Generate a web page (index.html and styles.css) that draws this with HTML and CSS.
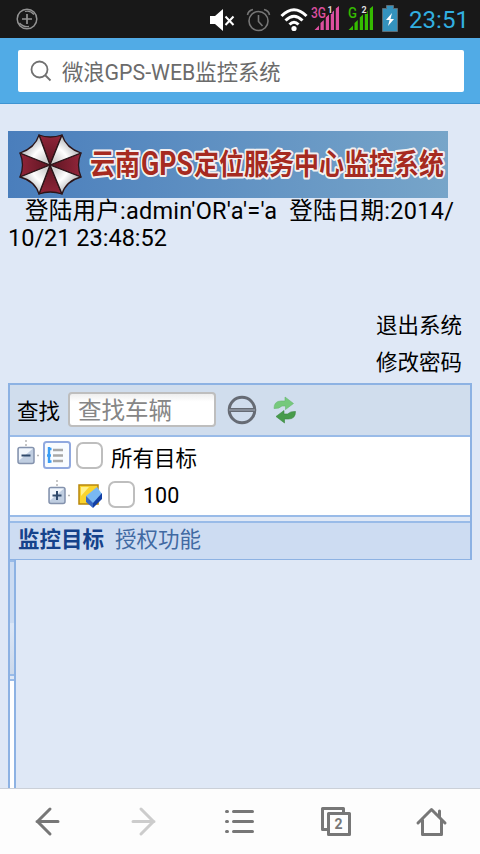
FILE: index.html
```html
<!DOCTYPE html>
<html lang="zh-CN">
<head>
<meta charset="utf-8">
<title>微浪GPS-WEB监控系统</title>
<link rel="stylesheet" href="styles.css">
</head>
<body>
<div class="screen">
  <header class="status">
    <svg class="plus" width="24" height="24" viewBox="0 0 24 24" fill="none" stroke="#929292"><circle cx="12" cy="12" r="9.800" stroke-width="1.500"/><path d="M7 12h10M12 7v10" stroke-width="1.700"/><path d="M10 4.500q5-1.500 9 3M4.500 16q4 4.500 9.500 3.500" stroke-width="1.300"/></svg>
    <div class="status-icons">
      <svg width="26" height="24" viewBox="0 0 26 24"><path d="M1 8h5l8-7v22l-8-7H1z" fill="#fff"/><path d="M16.500 8.500l8 8.500M24.500 8.500l-8 8.500" stroke="#fff" stroke-width="2"/></svg>
      <svg class="alarm" width="26" height="24" viewBox="0 0 26 24" fill="none" stroke="#777" stroke-width="1.600"><circle cx="12.500" cy="13" r="9.500"/><path d="M12.500 7v6.500l4 4.500M1.500 7q.8-4.500 5.500-5.500M23.500 7q-.8-4.500-5.500-5.500"/></svg>
      <svg class="wifi" width="28" height="25" viewBox="0 0 28 25" fill="none" stroke="#fff" stroke-width="3"><path d="M1.500 9q12.500-12.500 25 0M5.500 13.500q8.500-8.500 17 0M9.500 17.500q4.500-4.500 9 0"/><circle cx="14" cy="21.500" r="2.600" fill="#fff" stroke="none"/></svg>
      <svg class="signal" width="29" height="26" viewBox="0 0 29 26"><path d="M4.500 25l4.500-4.500V25zM10.500 25v-7l3.300-3v10zM15.800 25V12.500l3.200-3V25zM20.800 25V8.500l3.200-3V25zM25.800 25V3.500L29 1v24z" fill="#dc4f9f"/><text x="1" y="12.500" textLength="15" lengthAdjust="spacingAndGlyphs" class="net pink">3G</text><text x="17.500" y="8" class="sim">1</text></svg>
      <svg class="signal second" width="29" height="26" viewBox="0 0 29 26"><path d="M1.500 25L6 20.500V25zM7.500 25v-7l3.300-3v10zM12.800 25V12.500l3.200-3V25zM17.800 25V8.500l3.200-3V25zM22.800 25V3.500L26 1v24z" fill="#35bb00"/><text x="1" y="12.500" textLength="9" lengthAdjust="spacingAndGlyphs" class="net green">G</text><text x="14.500" y="8" class="sim">2</text></svg>
      <svg class="battery" width="16" height="27" viewBox="0 0 16 27"><path d="M.5 3.500h4V.5h7v3h4v23H.5z" fill="#3492bd" stroke="#5c6b74"/><path d="M10 8l-6 7h3.500L6 21l6-7H8.500z" fill="#fff"/></svg>
      <svg class="clock" width="64" height="26" viewBox="0 0 64 26"><text x="0" y="20" textLength="60" class="time">23:51</text></svg>
    </div>
  </header>
  <div class="address">
    <div class="search">
      <svg width="22" height="22" viewBox="0 0 22 22" fill="none" stroke="#707070" stroke-width="1.800"><circle cx="9.500" cy="9.500" r="8"/><path d="M15 15l5.500 5.500"/></svg>
      <span>微浪GPS-WEB监控系统</span>
    </div>
  </div>
  <main class="page">
    <svg class="banner" width="440" height="67" viewBox="0 0 440 67">
      <defs>
        <linearGradient id="sky"><stop stop-color="#4a7ebc"/><stop offset="1" stop-color="#77a5c9"/></linearGradient>
        <radialGradient id="silver" gradientUnits="userSpaceOnUse" cx="42" cy="34" r="31"><stop offset=".2" stop-color="#d0d0d0"/><stop offset=".6" stop-color="#fff"/><stop offset="1" stop-color="#b5b8bb"/></radialGradient>
        <radialGradient id="ruby" gradientUnits="userSpaceOnUse" cx="42" cy="34" r="31"><stop stop-color="#5c1521"/><stop offset="1" stop-color="#92253a"/></radialGradient>
      </defs>
      <rect width="440" height="67" fill="url(#sky)"/>
      <g stroke="#2b1519" stroke-width="1.300" stroke-linejoin="round">
        <path fill="url(#ruby)" d="M42 34L31 4Q42 8 54 4ZM42 34L73 22Q68 34 73 46ZM42 34L54 63Q42 59 31 63ZM42 34L12 46Q17 34 12 22Z"/>
        <path fill="url(#silver)" d="M42 34L54 4Q58 17 73 22ZM42 34L73 46Q58 50 54 63ZM42 34L31 63Q27 50 12 46ZM42 34L12 22Q27 17 31 4Z"/>
      </g>
      <g class="banner-title">
        <text x="82" y="44" textLength="50" lengthAdjust="spacingAndGlyphs">云南</text>
        <text x="133" y="44" textLength="52" lengthAdjust="spacingAndGlyphs" class="latin">GPS</text>
        <text x="186" y="44" textLength="250" lengthAdjust="spacingAndGlyphs">定位服务中心监控系统</text>
      </g>
    </svg>
    <p class="login"><span class="user">登陆用户:admin'OR'a'='a&nbsp; 登陆日期:2014/</span><br>10/21 23:48:52</p>
    <nav class="account"><a>退出系统</a><a>修改密码</a></nav>
    <section class="panel">
      <div class="toolbar">
        <label>查找</label>
        <div class="field">查找车辆</div>
        <svg class="stop" width="30" height="30" viewBox="0 0 30 30" fill="none" stroke="#666b74"><circle cx="15" cy="15" r="12.800" stroke-width="3"/><path d="M1 15h28" stroke-width="4"/><path d="M2 15h26" stroke="#9299a4" stroke-width="1.500"/></svg>
        <svg class="refresh" width="24" height="28" viewBox="0 0 24 28"><path d="M1 12.500Q1 5 8 5h4V1l8.500 6.500-8 6V10H9q-3 3-8 2.500z" fill="#76c97c" stroke="#68b570" stroke-width=".6"/><path d="M22.500 15.500q0 7.500-7 7.500h-4v4L3 20.500l8-6V18h3.500q3-3 8-2.500z" fill="#479b4b" stroke="#3c8742" stroke-width=".6"/></svg>
      </div>
      <div class="tree">
        <div class="node">
          <svg class="toggle" width="24" height="28" viewBox="0 0 24 28"><g id="box"><path d="M9 1v2M9 5v2M20 16.500h2" stroke="#b5b5b5" stroke-width="1.500"/><rect x="1" y="8.500" width="16" height="16" rx="2" fill="#c0cee1" stroke="#8492ad" stroke-width="1.500"/><path d="M2 9.500h14l-14 12z" fill="#f1f6fc"/><path d="M4.500 16.500h9" stroke="#304a6c" stroke-width="2"/></g></svg>
          <svg class="list" width="28" height="28" viewBox="0 0 28 28"><rect x="1" y="1" width="26" height="26" rx="2.500" fill="#f9fcff" stroke="#91a9df" stroke-width="2"/><path d="M10 9h10M10 14.500h10M10 20h10" stroke="#a8a8a8" stroke-width="2.400"/><path d="M4 14.500h4M6 6v16M6 8h2.500M6 20.500h2.500" stroke="#3a9df5" stroke-width="2.400"/></svg>
          <i class="check"></i><span>所有目标</span>
        </div>
        <div class="node child">
          <svg class="toggle" width="24" height="28" viewBox="0 0 24 28"><use href="#box"/><path d="M9 12v9" stroke="#304a6c" stroke-width="2"/></svg>
          <svg class="shape" width="25" height="26" viewBox="0 0 25 26"><rect x="1" y="2" width="19" height="19" fill="#fbd42d" stroke="#b8860b" stroke-width="1.500"/><path d="M3 4h8L3 13z" fill="#fff18d"/><path d="M8 13l11-9 5 7-9 10z" fill="#79b8f2"/><path d="M8 13l7 7v5l-7-6z" fill="#3768c6"/><path d="M15 20l9-10v6l-9 9z" fill="#123fa5"/></svg>
          <i class="check"></i><span class="count">100</span>
        </div>
      </div>
      <div class="splitter"></div>
      <div class="tabs"><b>监控目标</b><span>授权功能</span></div>
    </section>
    <div class="side"><div class="side-head"></div><div class="side-gap"></div></div>
  </main>
  <footer class="nav">
    <svg width="96" height="65" viewBox="0 0 96 65"><path d="M58 32.500H37M50 20L37.500 32.500 50 45"/></svg>
    <svg class="off" width="96" height="65" viewBox="0 0 96 65"><path d="M37 32.500h21M45 20l12.500 12.500L45 45"/></svg>
    <svg width="96" height="65" viewBox="0 0 96 65"><path d="M34.500 22.500h1M41.500 22.500h19M34.500 32.500h1M41.500 32.500h19M34.500 42.500h1M41.500 42.500h19"/></svg>
    <svg width="96" height="65" viewBox="0 0 96 65"><path d="M39 40.500h-4.500v-21h21V24M40.500 24.500h21v21h-21z"/><text x="50.500" y="40" text-anchor="middle" class="tabs-count">2</text></svg>
    <svg width="96" height="65" viewBox="0 0 96 65"><path d="M34 34l13.500-13.500L61 34M38.500 31v14.500h19V31M55.500 22v6"/></svg>
  </footer>
</div>
</body>
</html>
```
FILE: styles.css
```css
* { box-sizing: border-box; }
body { margin: 0; font-family: Roboto, "Noto Sans CJK SC", sans-serif; color: #000; }
svg { display: block; flex: none; }
.screen { width: 480px; height: 854px; display: flex; flex-direction: column; overflow: hidden; background: #dfe8f6; }
.status { height: 38px; flex: none; background: #181818; display: flex; justify-content: space-between; padding-left: 15px; }
.plus { margin-top: 7px; }
.status-icons { display: flex; width: 271px; padding-top: 8px; }
.alarm { margin-left: 11px; }
.wifi { margin: -1px 0 0 8px; }
.signal { margin: -3px 0 0 2px; }
.second { margin-left: 8px; }
.battery { margin: -3px 0 0 6px; }
.clock { margin-left: 11px; }
.net { font: 500 14px Roboto, sans-serif; }
.pink { fill: #dc4f9f; }
.green { fill: #35bb00; }
.sim { font: bold 9px Roboto, sans-serif; fill: #ddd; stroke: #181818; stroke-width: 2px; paint-order: stroke; }
.time { font: 24px Roboto, sans-serif; fill: #32afe0; }
.address { height: 66px; flex: none; padding: 12px 16px 0 18px; background: #51abe6; border-bottom: 1px solid #3e94d2; }
.search { height: 42px; display: flex; align-items: center; gap: 10px; padding: 0 0 1px 12px; background: #fff; border-radius: 2px; color: #6b6b6b; font-size: 21.300px; white-space: nowrap; }
.page { flex: 1; min-height: 0; padding: 27px 8px 0; display: flex; flex-direction: column; }
.banner { flex: none; }
.banner-title { font: bold 29px "Noto Sans CJK SC", sans-serif; fill: #a62a20; stroke: #f3f0f0; stroke-width: 4px; stroke-linejoin: round; paint-order: stroke; }
.latin { font: bold 33px Roboto, sans-serif; }
.login { height: 54px; flex: none; margin: 0; font-size: 23.500px; line-height: 27px; white-space: nowrap; }
.user { margin-left: 17px; letter-spacing: .25px; }
.account { display: flex; flex-direction: column; align-items: flex-end; margin-top: 55px; padding-right: 10px; font-size: 21.500px; line-height: 37px; height: 76px; flex: none; }
.panel { width: 464px; flex: none; border: solid #8db2e3; border-width: 2px 2px 1px; font-size: 21.500px; }
.toolbar { height: 52px; display: flex; align-items: center; padding: 0 0 1px 7px; background: #d0dded; border-bottom: 2px solid #99bbe8; }
.field { width: 148px; height: 35px; margin-left: 8px; padding-left: 8px; border: 2px solid #bebebe; border-radius: 4px; background: linear-gradient(#eee, #fff 25%); color: #868686; font-size: 23.500px; line-height: 34px; }
.stop { margin-left: 11px; }
.refresh { margin-left: 16px; }
.tree { height: 78px; background: #fff; }
.node { height: 39px; display: flex; align-items: center; padding: 0 0 1px 7px; }
.child { padding: 0 0 0 38px; }
.toggle { margin-top: -6px; }
.list { margin: -2px 0 0 2px; }
.shape { margin-left: 6px; }
.check { width: 27px; height: 27px; margin: -2px 8px 0 5px; border: 2px solid #bebebe; border-radius: 7px; background: #fff; }
.child .check { margin-left: 5px; }
.splitter { height: 8px; border: solid #99bbe8; border-width: 2px 0; background: #dfe8f6; }
.tabs { height: 36px; display: flex; align-items: center; gap: 11px; padding: 0 0 7px 8px; background: #cddcf2; color: #416aa3; }
.tabs b { color: #15428b; font-weight: 700; }
.side { width: 8px; flex: 1; border: solid #8db2e3; border-width: 0 2px; background: #fff; }
.side-head { height: 114px; border-top: 2px solid #99bbe8; background: linear-gradient(#cbdbf2 0 54%, #dce7f7 55%, #ccd9eb); }
.side-gap { height: 7px; border: solid #99bbe8; border-width: 2px 0; background: #dfe8f6; }
.nav { height: 66px; flex: none; display: flex; border-top: 1px solid #cbd0d8; background: #fdfdfd; fill: none; stroke: #777; stroke-width: 3px; stroke-linecap: round; stroke-linejoin: round; }
.off { stroke: #ccc; }
.tabs-count { font: bold 14px Roboto, sans-serif; fill: #777; stroke: none; }
```
